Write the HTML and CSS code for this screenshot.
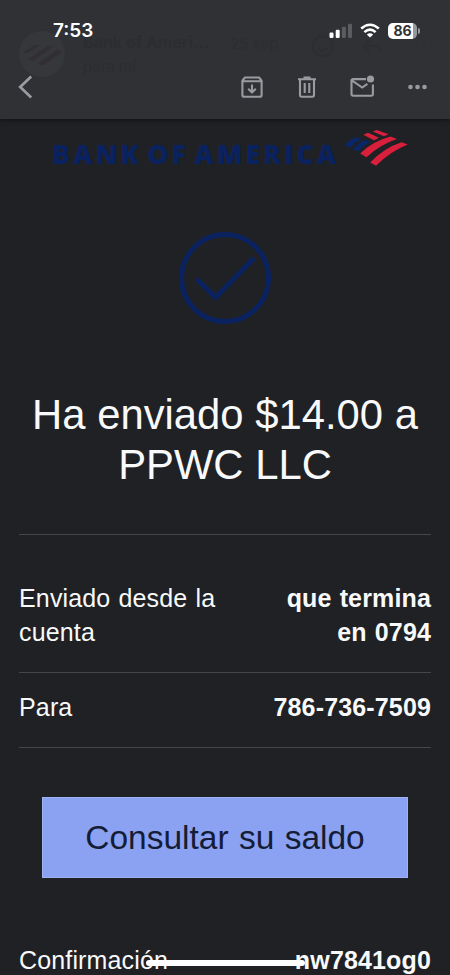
FILE: index.html
```html
<!DOCTYPE html>
<html lang="es">
  <head>
    <meta charset="UTF-8" />
    <meta name="viewport" content="width=device-width, initial-scale=1.0" />
    <title>Bank of America</title>
    <link rel="stylesheet" href="styles.css">
  </head>
  <body>
    <div class="screen">
      <header class="header">
        <!-- message header showing faintly through the bar -->
        <div class="sender">
          <svg class="avatar" width="48" height="48" viewBox="0 0 48 48">
            <circle cx="24" cy="24" r="23" fill="#36373b" />
            <path d="M5 22l12-7h5L8 24zM10 29l20-13h6L15 31zM19 34l20-14 5 2-18 13z" fill="#312f34" />
          </svg>
          <div class="sender-text">
            <div class="sender-name">Bank of Ameri...</div>
            <div class="sender-to">para mí</div>
          </div>
          <span class="sender-date">25 sep.</span>
          <svg class="sender-actions" width="126" height="26" viewBox="0 0 126 26" fill="none" stroke="#2d2e31" stroke-width="2">
            <circle cx="13" cy="13" r="10" />
            <path d="M8 15q5 5 10 0M9 10h1M16 10h1M60 7l-6 6 6 6M54 13h12q5 0 5 6M106 13h2M113 13h2M120 13h2" />
          </svg>
        </div>

        <div class="status-bar">
          <span class="time">7:53</span>
          <div class="status-icons">
            <svg width="24" height="16" viewBox="0 0 24 16">
              <rect x="0.5" y="9.5" width="4" height="5.5" rx="1.2" fill="#fff" />
              <rect x="6.7" y="6.7" width="4" height="8.3" rx="1.2" fill="#fff" />
              <rect x="12.9" y="3.7" width="4" height="11.3" rx="1.2" fill="#5b5c60" />
              <rect x="19" y="0.7" width="4" height="14.3" rx="1.2" fill="#5b5c60" />
            </svg>
            <svg class="wifi" width="20" height="16" viewBox="0 0 20 16" fill="none" stroke="#fff" stroke-width="2.6">
              <path d="M1.2 5.6Q10 -2.1 18.8 5.6" />
              <path d="M4.4 9.1Q10 4.1 15.6 9.1" />
              <path d="M10 14.6L6.8 11.5Q10 8.8 13.2 11.5z" fill="#fff" stroke="none" />
            </svg>
            <div class="battery">86</div>
          </div>
        </div>

        <nav class="toolbar">
          <svg width="16" height="26" viewBox="0 0 16 26" fill="none" stroke="#9a9ba1" stroke-width="2.7">
            <path d="M13.2 2.5L2.2 13l11 10.5" />
          </svg>
          <div class="toolbar-actions">
            <svg width="24" height="24" viewBox="0 0 24 24" fill="none" stroke="#9a9ba1" stroke-width="2.1" stroke-linejoin="round">
              <path d="M2.4 5.7L5 2.5h14l2.6 3.2V20q0 1.8-1.8 1.8H4.2q-1.8 0-1.8-1.8zM2.4 6.2h19.2M12 9.5v8M8.2 13.8l3.8 3.8 3.8-3.8" />
            </svg>
            <svg width="24" height="24" viewBox="0 0 24 24" fill="none" stroke="#9a9ba1" stroke-width="2.1">
              <path d="M3 4.2h18M8.5 2.6h7M5 4.5V20q0 1.7 1.7 1.7h10.6q1.7 0 1.7-1.7V4.5M9.7 8v10M14.3 8v10" />
            </svg>
            <svg width="26" height="24" viewBox="0 0 26 24" fill="none" stroke="#9a9ba1" stroke-width="2.1">
              <path d="M16 4.1H3.2Q1.5 4.1 1.5 5.8V19q0 1.7 1.7 1.7h18q1.7 0 1.7-1.7V9.5M2 5.5l10.2 7 5.2-3.6" />
              <circle cx="20.5" cy="4" r="3.6" fill="#9a9ba1" stroke="none" />
            </svg>
            <svg width="20" height="24" viewBox="0 0 20 24" fill="#9a9ba1">
              <circle cx="3.5" cy="12" r="2.3" />
              <circle cx="10.5" cy="12" r="2.3" />
              <circle cx="17.5" cy="12" r="2.3" />
            </svg>
          </div>
        </nav>
      </header>

      <main class="message">
        <div class="brand">
          <span class="brand-name">BANK OF AMERICA</span>
          <svg class="brand-flag" width="66" height="40" viewBox="0 0 66 40">
            <path d="M2.3 17.5Q7 12 13.5 9l6 2Q13 14 8.5 19.5zM10.7 21.5Q16 15 23 11.7l5.5 2.3Q21 17.5 16.3 23.5z" fill="#0a2667" />
            <path d="M21.3 6.7L26 4.7 37 9.7 32 12.3zM30.7 3.5L34.7 2 46.5 6.3 42 8.2zM18.2 25.5Q31 13 48.5 8.5L55 11Q38 16.5 24.5 29.3zM28.2 34.5Q42 20 59.5 14.3L65.7 16.5Q48 23.5 34 37.8z" fill="#d91f3c" />
          </svg>
        </div>

        <svg class="check" width="94" height="94" viewBox="0 0 94 94" fill="none" stroke="#0a2260" stroke-width="5">
          <circle cx="47" cy="47" r="43.5" />
          <path d="M18.5 48L37.5 66.500 76 27" />
        </svg>

        <h1 class="title">Ha enviado $14.00 a<br>PPWC LLC</h1>

        <div class="details">
          <div class="row row-from">
            <span class="label">Enviado desde la cuenta</span>
            <span class="value">que termina<br>en 0794</span>
          </div>
          <div class="row">
            <span class="label">Para</span>
            <span class="value">786-736-7509</span>
          </div>
        </div>

        <a class="button">Consultar su saldo</a>

        <div class="row row-confirm">
          <span class="label">Confirmación</span>
          <span class="value">nw7841og0</span>
        </div>
      </main>
      <div class="home-indicator"></div>
    </div>
  </body>
</html>
```

FILE: styles.css
```css
* {
  margin: 0;
  padding: 0;
  box-sizing: border-box;
}

body {
  font-family: "Liberation Sans", Arial, sans-serif;
  background: #202124;
  color: #f8f9fa;
}

svg {
  display: block;
  flex-shrink: 0;
}

.screen {
  position: relative;
  width: 450px;
  height: 975px;
  overflow: hidden;
}

.header {
  position: relative;
  height: 119px;
  background: #303134;
  box-shadow: 0 1px 4px #101114;
}

.sender {
  position: absolute;
  top: 30px;
  left: 18px;
  width: 418px;
  display: flex;
  color: #2c2d30;
}

.sender-text {
  margin-left: 17px;
  width: 129px;
  white-space: nowrap;
}

.sender-name {
  font: bold 16px/24px Inter, sans-serif;
}

.sender-to {
  font: 15px/26px Inter, sans-serif;
}

.sender-date {
  margin: 4px 0 0 18px;
  font: 15px/20px Inter, sans-serif;
}

.sender-actions {
  margin: 3px 0 0 auto;
}

.status-bar {
  position: relative;
  height: 61px;
  padding: 0 33px 0 53px;
  display: flex;
  align-items: center;
  justify-content: space-between;
}

.time {
  font: 600 19px/22px Inter, sans-serif;
  color: #fff;
}

.status-icons {
  display: flex;
  align-items: center;
}

.wifi {
  margin: 0 8px 0 7px;
}

.battery {
  position: relative;
  width: 29px;
  height: 16px;
  border-radius: 5px;
  background: linear-gradient(90deg, #fff 86%, #97989b 86%);
  color: #303134;
  font: bold 14px/16px Inter, sans-serif;
  text-align: center;
}

.battery::after {
  content: "";
  position: absolute;
  top: 5px;
  right: -3px;
  width: 2px;
  height: 6px;
  border-radius: 0 2px 2px 0;
  background: #97989b;
}

.toolbar {
  position: relative;
  height: 52px;
  padding: 0 23px 0 18px;
  display: flex;
  align-items: center;
  justify-content: space-between;
}

.toolbar-actions {
  display: flex;
  align-items: center;
  gap: 31px;
}

.message {
  padding: 9px 19px 0;
  display: flex;
  flex-direction: column;
  align-items: center;
}

.brand {
  height: 40px;
  width: 100%;
  padding-left: 33px;
  display: flex;
}

.brand-name {
  width: 290px;
  padding-top: 11px;
  color: #0a2260;
  font: 800 26.5px/30px "Open Sans", sans-serif;
  letter-spacing: 3.1px;
  word-spacing: -4.5px;
  white-space: nowrap;
}

.check {
  margin-top: 63px;
}

.title {
  margin-top: 65px;
  font-size: 41.8px;
  font-weight: 400;
  line-height: 50px;
  text-align: center;
  white-space: nowrap;
}

.details {
  width: 100%;
  margin-top: 44px;
  padding-top: 34px;
  border-top: 1px solid #45464a;
}

.row {
  width: 100%;
  height: 75px;
  padding-top: 18px;
  display: flex;
  justify-content: space-between;
  border-bottom: 1px solid #45464a;
  font-size: 25px;
  line-height: 33.5px;
  letter-spacing: 0.15px;
  word-spacing: 1px;
}

.row-from {
  height: 104px;
  padding-top: 13px;
}

.label {
  max-width: 210px;
}

.value {
  font-weight: bold;
  text-align: right;
}

.button {
  width: 366px;
  height: 81px;
  margin-top: 49px;
  background: #8ba2f3;
  border: 1px solid #a0b2f5;
  color: #151d36;
  font-size: 33.5px;
  line-height: 79px;
  text-align: center;
  word-spacing: 1px;
}

.row-confirm {
  margin-top: 48px;
  border-bottom: none;
}

.home-indicator {
  position: absolute;
  left: 146px;
  top: 960px;
  width: 159px;
  height: 6px;
  border-radius: 3px;
  background: #fff;
}
```
